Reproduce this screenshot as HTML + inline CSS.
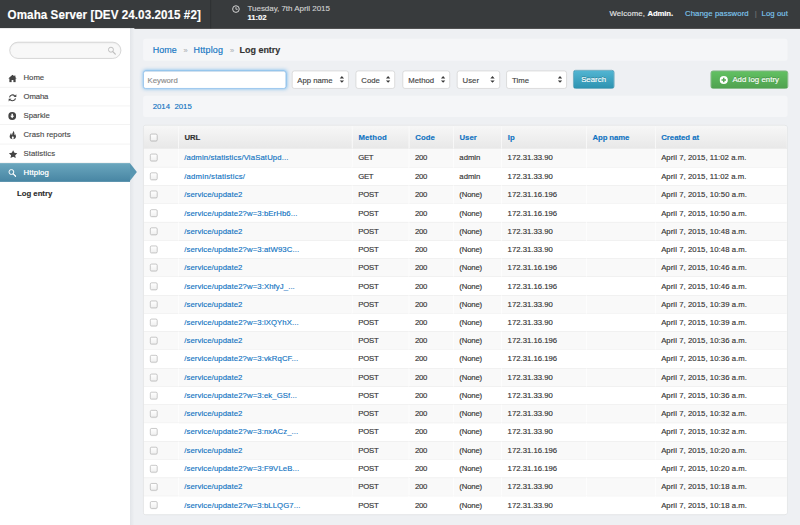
<!DOCTYPE html>
<html>
<head>
<meta charset="utf-8">
<title>Select log entry to change | Omaha Server</title>
<style>
html,body{margin:0;padding:0;}
body{width:800px;height:525px;overflow:hidden;background:#eef0f3;}
#scale{position:absolute;left:0;top:0;width:1280px;height:840px;transform:scale(0.625);transform-origin:0 0;
  font-family:"Liberation Sans",sans-serif;font-size:12.4px;line-height:18px;color:#333;background:#eef0f3;overflow:hidden;-webkit-text-stroke:0.22px;}
a{color:#1073c2;text-decoration:none;}
/* header */
#header{position:absolute;left:0;top:0;width:1280px;height:44.64px;background:#383b3d;color:#d8d8d8;box-shadow:0 1px 0 #222;}
#header h1{position:absolute;left:12.2px;top:10.52px;margin:0;font-size:18.6px;line-height:26px;font-weight:bold;color:#fff;white-space:nowrap;letter-spacing:0.1px;transform:scaleY(1.06);transform-origin:0 50%;}
#header .sep{position:absolute;left:336.48px;top:0;width:1px;height:44.64px;background:#26282a;border-right:1px solid #414446;}
#header .clock{position:absolute;left:371.1px;top:7.9px;}
#header .date{position:absolute;left:396.0px;top:4.60px;font-size:12.8px;line-height:16px;color:#d0d0d0;white-space:nowrap;}
#header .time{position:absolute;left:396.0px;top:20.16px;font-size:12.4px;line-height:16px;color:#fff;font-weight:bold;letter-spacing:-0.1px;}
#header .ut{position:absolute;top:11.90px;font-size:12.4px;line-height:18px;color:#e4e4e4;white-space:nowrap;}
#header .ut b{color:#fff;letter-spacing:-0.2px;}
#header a.ut{color:#7fc8f0;}
/* sidebar */
#left{position:absolute;left:0;top:44.64px;width:208.16px;height:800px;background:#fff;z-index:5;}
#centershadow{position:absolute;left:208.16px;top:44.64px;width:7px;height:800px;background:linear-gradient(to right,#e2e5e9,#eef0f3);}
#search{position:absolute;left:14.56px;top:67.2px;width:177.36px;height:24.56px;border:1px solid #c2c2c2;border-radius:14px;background:#f8f8f8;box-shadow:inset 0 1px 2px rgba(0,0,0,0.08);z-index:6;}
#search svg{position:absolute;right:7.4px;top:6px;}
.ni{position:absolute;left:0;width:208.16px;height:29.24px;border-bottom:1px solid #ececec;z-index:6;}
.ni .ic{position:absolute;left:13.12px;top:9.44px;line-height:0;}
.ni .nt{position:absolute;left:37.6px;top:5.60px;color:#4a4a4a;white-space:nowrap;}
#act{position:absolute;left:0;top:260.64px;width:208.16px;height:29.92px;background:linear-gradient(to bottom,#6ba7be,#4785a3);z-index:6;}
#act:after{content:"";position:absolute;left:208.16px;top:0;border-left:11.52px solid #5896b1;border-top:14.96px solid transparent;border-bottom:14.96px solid transparent;}
#act .ic{position:absolute;left:13.12px;top:9px;line-height:0;}
#act .nt{position:absolute;left:37.6px;top:6.32px;color:#fff;letter-spacing:0.22px;text-shadow:0 0 1px rgba(255,255,255,0.5);}
#sub{position:absolute;left:27.2px;top:299.76px;font-weight:bold;color:#2b2b2b;z-index:6;white-space:nowrap;}
/* center */
.box{position:absolute;left:229.12px;width:1030.72px;background:#f5f6f8;border-radius:4px;}
#bc{top:62.4px;height:34.56px;}
#bc span,#bc a,#bc b{position:absolute;top:7.40px;font-size:14.3px;line-height:18px;white-space:nowrap;}
#bc .d{color:#b4b8bc;font-size:12px;margin-top:1.6px;}
#dates{top:152.8px;height:34.40px;}
#dates a{position:absolute;top:7.90px;font-size:12.4px;line-height:18px;}
/* filters */
.f{position:absolute;top:112.8px;height:28.96px;box-sizing:border-box;border:1px solid #cbcbcb;border-radius:4px;background:#fff;font-size:12.4px;line-height:28.16px;color:#444;padding-left:8px;white-space:nowrap;}
.f .ar{position:absolute;right:6.2px;top:7.08px;}
#kw{left:229.12px;width:229.12px;border-color:#78b4e8;box-shadow:0 0 6px rgba(82,168,236,0.75), inset 0 1px 1px rgba(0,0,0,0.075);color:#8c8c8c;padding-left:6px;}
#btn-search{position:absolute;left:916.8px;top:112.48px;width:65.92px;height:29.44px;box-sizing:border-box;border:1px solid #2c8aa6;border-radius:4px;background:linear-gradient(to bottom,#52b5d2,#2e93b1);color:#fff;font-size:12.4px;line-height:29.84px;text-align:center;text-shadow:0 -1px 0 rgba(0,0,0,0.25);letter-spacing:0.1px;}
#btn-add{position:absolute;left:1136.64px;top:112.64px;width:124.16px;height:28.96px;box-sizing:border-box;border:1px solid #4c9b4c;border-radius:4px;background:linear-gradient(to bottom,#62c162,#50a250);color:#fff;font-size:12.4px;line-height:26.36px;text-shadow:0 -1px 0 rgba(0,0,0,0.25);white-space:nowrap;}
#btn-add svg{position:absolute;left:13.62px;top:6.98px;}
#btn-add span{position:absolute;left:34.20px;top:0;letter-spacing:0.12px;}
/* table */
#tbl{position:absolute;left:229.44px;top:200.4px;width:1030.24px;height:623.12px;border:1px solid #d9dadc;border-radius:4px;box-sizing:border-box;overflow:hidden;background:#fff;}
table{border-collapse:separate;border-spacing:0;width:1028.24px;table-layout:fixed;font-size:12.4px;}
th{height:36.36px;padding:1px 0 0 9.4px;text-align:left;font-weight:bold;color:#1073c2;border-left:1px solid #f7f7f7;border-bottom:1px solid #dcdcdc;background:linear-gradient(to bottom,#f7f7f7,#e8e8e8);box-sizing:border-box;white-space:nowrap;}
th.k{color:#333;}
td{height:29.238px;padding:0 0 0 9.2px;border-left:1px solid transparent;border-top:1px solid #ececec;box-sizing:border-box;color:#333;white-space:nowrap;overflow:hidden;}
tr.r1 td{background:#f9f9f9;border-left-color:#fff;}
tr.r2 td{background:#fff;}
tbody tr:first-child td{border-top:none;}
th:first-child,td:first-child{border-left:none;}
.cb{display:block;width:10px;height:10px;border:1px solid #a9a9a9;border-radius:2.5px;background:linear-gradient(to bottom,#fff,#f0f0f0);box-shadow:0 1px 0 rgba(0,0,0,0.06);}
</style>
</head>
<body>
<div id="scale">
  <div id="header">
    <h1>Omaha Server [DEV 24.03.2015 #2]</h1>
    <div class="sep"></div>
    <svg class="clock" width="13" height="13" viewBox="0 0 13 13"><circle cx="6.500" cy="6.500" r="5.300" fill="none" stroke="#e0e0e0" stroke-width="1.500"/><path d="M6.500 3.300v3.500h2.800" fill="none" stroke="#e0e0e0" stroke-width="1.300"/></svg>
    <div class="date" style="letter-spacing:-0.05px">Tuesday, 7th April 2015</div>
    <div class="time">11:02</div>
    <span class="ut" style="left:975.2px;letter-spacing:0.27px">Welcome,</span>
    <span class="ut" style="left:1036.0px"><b>Admin.</b></span>
    <a class="ut" style="left:1096.0px;letter-spacing:0.14px">Change password</a>
    <span class="ut" style="left:1207.68px;color:#6d7073">|</span>
    <a class="ut" style="left:1218.4px;letter-spacing:0.15px">Log out</a>
  </div>
  <div id="left"></div>
  <div id="centershadow"></div>
  <div id="search"><svg width="14" height="14" viewBox="0 0 14 14"><circle cx="5.500" cy="5.500" r="4" fill="none" stroke="#bcbcbc" stroke-width="1.500"/><path d="M8.500 8.500l4 4" stroke="#bcbcbc" stroke-width="1.900" stroke-linecap="round"/></svg></div>
<div class="ni" style="top:109.60px"><span class="ic" style="left:12.64px;top:9.12px"><svg width="14" height="13" viewBox="0 0 14 13"><path d="M7 0.4L0.2 6.6H2V12.6H5.6V8.8H8.4V12.6H12V6.6H13.8L11.6 4.6V1.7H9.9V3.05Z" fill="#444"/></svg></span><span class="nt" style="letter-spacing:-0.01px;margin-top:-0.3px">Home</span></div>
<div class="ni" style="top:139.84px"><span class="ic" style="left:12.8px;top:9.76px"><svg width="14" height="13" viewBox="0 0 14 13"><path d="M2.200 5.700A5 5 0 0 1 10.600 3.300" fill="none" stroke="#444" stroke-width="1.700"/><path d="M13.200 0.600v4.600H8.600z" fill="#444"/><path d="M11.800 7.300A5 5 0 0 1 3.400 9.700" fill="none" stroke="#444" stroke-width="1.700"/><path d="M0.800 12.400V7.800H5.400z" fill="#444"/></svg></span><span class="nt" style="letter-spacing:-0.19px">Omaha</span></div>
<div class="ni" style="top:170.08px"><span class="ic" style="left:13.44px;top:9.12px"><svg width="13" height="13" viewBox="0 0 13 13"><circle cx="6.500" cy="6.500" r="6.300" fill="#444"/><path d="M5.300 2.800h2.400v3.200h2.100L6.500 10 3.200 6h2.100z" fill="#fff"/></svg></span><span class="nt" style="letter-spacing:0.03px">Sparkle</span></div>
<div class="ni" style="top:200.32px"><span class="ic" style="left:13.76px;top:9.12px"><svg width="13" height="14" viewBox="0 0 13 14"><path fill-rule="evenodd" d="M6.800 0.300C7.600 2 6.400 3.600 5.600 5C5.200 5.800 5.300 6.800 5.900 7.400C5.200 7.300 4.500 6.600 4.400 5.600C4.300 4.800 3.900 4.200 3.200 3.800C3.600 5.400 1.400 7 1.400 9.400C1.400 11.900 3.600 13.700 6.500 13.700C9.400 13.700 11.600 12 11.600 9.400C11.600 7.600 10.600 6.600 10.400 5.200C9.800 5.800 9.600 6.600 9.700 7.400C8.600 6.400 9.400 4.600 8.800 3C8.400 1.800 7.600 0.800 6.800 0.300ZM6.500 13.200C5.300 13 4.600 12 5 10.900C5.300 10 6.200 9.600 6.300 8.400C7.600 9.400 8.300 10.400 8.100 11.600C8 12.500 7.400 13 6.500 13.200Z" fill="#444"/></svg></span><span class="nt" style="letter-spacing:0.03px">Crash reports</span></div>
<div class="ni" style="top:230.56px"><span class="ic" style="left:13.6px;top:9.92px"><svg width="14" height="13" viewBox="0 0 14 13"><path d="M7 0.200l2.100 4.300 4.700.600-3.500 3.200.9 4.600L7 10.600l-4.200 2.300.9-4.600L.200 5.100l4.700-.600z" fill="#444"/></svg></span><span class="nt" style="letter-spacing:0.1px">Statistics</span></div>
  <div id="act"><span class="ic"><svg width="13" height="13" viewBox="0 0 13 13"><circle cx="5.200" cy="5.200" r="3.900" fill="none" stroke="#fff" stroke-width="1.600"/><path d="M8.200 8.200l3.800 3.800" stroke="#fff" stroke-width="2" stroke-linecap="round"/></svg></span><span class="nt">Httplog</span></div>
  <div id="sub">Log entry</div>
  <div id="bc" class="box"><a style="left:15.28px;letter-spacing:0.1px">Home</a><span class="d" style="left:64.32px">&raquo;</span><a style="left:80.64px;letter-spacing:0.27px">Httplog</a><span class="d" style="left:138.88px">&raquo;</span><b style="left:154.24px">Log entry</b></div>
  <div id="dates" class="box"><a style="left:15.28px">2014</a><a style="left:50.08px">2015</a></div>
  <div id="kw" class="f">Keyword</div>
  <div class="f" style="left:466.56px;width:91.68px"><span style="letter-spacing:0px">App name</span><svg class="ar" width="8" height="12.400" viewBox="0 0 8 12"><path d="M0.500 4.500L4 0.600l3.500 3.900zM0.500 7.500L4 11.400l3.500-3.900z" fill="#3a3a3a"/></svg></div>
  <div class="f" style="left:569.12px;width:63.20px"><span style="letter-spacing:0px">Code</span><svg class="ar" width="8" height="12.400" viewBox="0 0 8 12"><path d="M0.500 4.500L4 0.600l3.500 3.900zM0.500 7.500L4 11.400l3.500-3.900z" fill="#3a3a3a"/></svg></div>
  <div class="f" style="left:644.16px;width:75.84px"><span style="letter-spacing:0px">Method</span><svg class="ar" width="8" height="12.400" viewBox="0 0 8 12"><path d="M0.500 4.500L4 0.600l3.500 3.900zM0.500 7.500L4 11.400l3.500-3.900z" fill="#3a3a3a"/></svg></div>
  <div class="f" style="left:731.2px;width:68.40px"><span style="letter-spacing:0px">User</span><svg class="ar" width="8" height="12.400" viewBox="0 0 8 12"><path d="M0.500 4.500L4 0.600l3.500 3.900zM0.500 7.500L4 11.400l3.500-3.900z" fill="#3a3a3a"/></svg></div>
  <div class="f" style="left:810.4px;width:96.40px"><span style="letter-spacing:0px">Time</span><svg class="ar" width="8" height="12.400" viewBox="0 0 8 12"><path d="M0.500 4.500L4 0.600l3.500 3.900zM0.500 7.500L4 11.400l3.500-3.900z" fill="#3a3a3a"/></svg></div>
  <div id="btn-search">Search</div>
  <div id="btn-add"><svg width="14" height="14" viewBox="0 0 14 14"><circle cx="7" cy="7" r="6.500" fill="#fff"/><path d="M7 3.400v7.200M3.400 7h7.200" stroke="#55a855" stroke-width="2.300"/></svg><span>Add log entry</span></div>
  <div id="tbl">
    <table>
      <colgroup><col style="width:54.52px"><col style="width:278.24px"><col style="width:90.80px"><col style="width:70.80px"><col style="width:77.20px"><col style="width:135.76px"><col style="width:109.92px"><col style="width:211.00px"></colgroup>
      <thead><tr><th class="c"><i class="cb"></i></th><th class="k" style="letter-spacing:-0.2px">URL</th><th style="letter-spacing:0.25px">Method</th><th style="letter-spacing:0.15px">Code</th><th>User</th><th>Ip</th><th style="letter-spacing:-0.17px">App name</th><th>Created at</th></tr></thead>
      <tbody>
<tr class="r1"><td class="c"><i class="cb"></i></td><td style="padding-left:8.8px"><a style="letter-spacing:0.2px">/admin/statistics/ViaSatUpd...</a></td><td style="letter-spacing:-0.6px">GET</td><td style="letter-spacing:-0.6px">200</td><td style="letter-spacing:-0.03px">admin</td><td>172.31.33.90</td><td></td><td style="letter-spacing:0.1px">April 7, 2015, 11:02 a.m.</td></tr>
<tr class="r2"><td class="c"><i class="cb"></i></td><td style="padding-left:8.8px"><a style="letter-spacing:0.33px">/admin/statistics/</a></td><td style="letter-spacing:-0.6px">GET</td><td style="letter-spacing:-0.6px">200</td><td style="letter-spacing:-0.03px">admin</td><td>172.31.33.90</td><td></td><td style="letter-spacing:0.1px">April 7, 2015, 11:02 a.m.</td></tr>
<tr class="r1"><td class="c"><i class="cb"></i></td><td style="padding-left:8.8px"><a style="letter-spacing:0.14px">/service/update2</a></td><td style="letter-spacing:-0.4px">POST</td><td style="letter-spacing:-0.6px">200</td><td style="letter-spacing:-0.3px">(None)</td><td>172.31.16.196</td><td></td><td style="letter-spacing:0.1px">April 7, 2015, 10:50 a.m.</td></tr>
<tr class="r2"><td class="c"><i class="cb"></i></td><td style="padding-left:8.8px"><a style="letter-spacing:0.15px">/service/update2?w=3:bErHb6...</a></td><td style="letter-spacing:-0.4px">POST</td><td style="letter-spacing:-0.6px">200</td><td style="letter-spacing:-0.3px">(None)</td><td>172.31.16.196</td><td></td><td style="letter-spacing:0.1px">April 7, 2015, 10:50 a.m.</td></tr>
<tr class="r1"><td class="c"><i class="cb"></i></td><td style="padding-left:8.8px"><a style="letter-spacing:0.14px">/service/update2</a></td><td style="letter-spacing:-0.4px">POST</td><td style="letter-spacing:-0.6px">200</td><td style="letter-spacing:-0.3px">(None)</td><td>172.31.33.90</td><td></td><td style="letter-spacing:0.1px">April 7, 2015, 10:48 a.m.</td></tr>
<tr class="r2"><td class="c"><i class="cb"></i></td><td style="padding-left:8.8px"><a style="letter-spacing:0.15px">/service/update2?w=3:atW93C...</a></td><td style="letter-spacing:-0.4px">POST</td><td style="letter-spacing:-0.6px">200</td><td style="letter-spacing:-0.3px">(None)</td><td>172.31.33.90</td><td></td><td style="letter-spacing:0.1px">April 7, 2015, 10:48 a.m.</td></tr>
<tr class="r1"><td class="c"><i class="cb"></i></td><td style="padding-left:8.8px"><a style="letter-spacing:0.14px">/service/update2</a></td><td style="letter-spacing:-0.4px">POST</td><td style="letter-spacing:-0.6px">200</td><td style="letter-spacing:-0.3px">(None)</td><td>172.31.16.196</td><td></td><td style="letter-spacing:0.1px">April 7, 2015, 10:46 a.m.</td></tr>
<tr class="r2"><td class="c"><i class="cb"></i></td><td style="padding-left:8.8px"><a style="letter-spacing:0.15px">/service/update2?w=3:XhfyJ_...</a></td><td style="letter-spacing:-0.4px">POST</td><td style="letter-spacing:-0.6px">200</td><td style="letter-spacing:-0.3px">(None)</td><td>172.31.16.196</td><td></td><td style="letter-spacing:0.1px">April 7, 2015, 10:46 a.m.</td></tr>
<tr class="r1"><td class="c"><i class="cb"></i></td><td style="padding-left:8.8px"><a style="letter-spacing:0.14px">/service/update2</a></td><td style="letter-spacing:-0.4px">POST</td><td style="letter-spacing:-0.6px">200</td><td style="letter-spacing:-0.3px">(None)</td><td>172.31.33.90</td><td></td><td style="letter-spacing:0.1px">April 7, 2015, 10:39 a.m.</td></tr>
<tr class="r2"><td class="c"><i class="cb"></i></td><td style="padding-left:8.8px"><a style="letter-spacing:0.15px">/service/update2?w=3:lXQYhX...</a></td><td style="letter-spacing:-0.4px">POST</td><td style="letter-spacing:-0.6px">200</td><td style="letter-spacing:-0.3px">(None)</td><td>172.31.33.90</td><td></td><td style="letter-spacing:0.1px">April 7, 2015, 10:39 a.m.</td></tr>
<tr class="r1"><td class="c"><i class="cb"></i></td><td style="padding-left:8.8px"><a style="letter-spacing:0.14px">/service/update2</a></td><td style="letter-spacing:-0.4px">POST</td><td style="letter-spacing:-0.6px">200</td><td style="letter-spacing:-0.3px">(None)</td><td>172.31.16.196</td><td></td><td style="letter-spacing:0.1px">April 7, 2015, 10:36 a.m.</td></tr>
<tr class="r2"><td class="c"><i class="cb"></i></td><td style="padding-left:8.8px"><a style="letter-spacing:0.15px">/service/update2?w=3:vkRqCF...</a></td><td style="letter-spacing:-0.4px">POST</td><td style="letter-spacing:-0.6px">200</td><td style="letter-spacing:-0.3px">(None)</td><td>172.31.16.196</td><td></td><td style="letter-spacing:0.1px">April 7, 2015, 10:36 a.m.</td></tr>
<tr class="r1"><td class="c"><i class="cb"></i></td><td style="padding-left:8.8px"><a style="letter-spacing:0.14px">/service/update2</a></td><td style="letter-spacing:-0.4px">POST</td><td style="letter-spacing:-0.6px">200</td><td style="letter-spacing:-0.3px">(None)</td><td>172.31.33.90</td><td></td><td style="letter-spacing:0.1px">April 7, 2015, 10:36 a.m.</td></tr>
<tr class="r2"><td class="c"><i class="cb"></i></td><td style="padding-left:8.8px"><a style="letter-spacing:0.15px">/service/update2?w=3:ek_GSf...</a></td><td style="letter-spacing:-0.4px">POST</td><td style="letter-spacing:-0.6px">200</td><td style="letter-spacing:-0.3px">(None)</td><td>172.31.33.90</td><td></td><td style="letter-spacing:0.1px">April 7, 2015, 10:36 a.m.</td></tr>
<tr class="r1"><td class="c"><i class="cb"></i></td><td style="padding-left:8.8px"><a style="letter-spacing:0.14px">/service/update2</a></td><td style="letter-spacing:-0.4px">POST</td><td style="letter-spacing:-0.6px">200</td><td style="letter-spacing:-0.3px">(None)</td><td>172.31.33.90</td><td></td><td style="letter-spacing:0.1px">April 7, 2015, 10:32 a.m.</td></tr>
<tr class="r2"><td class="c"><i class="cb"></i></td><td style="padding-left:8.8px"><a style="letter-spacing:0.15px">/service/update2?w=3:nxACz_...</a></td><td style="letter-spacing:-0.4px">POST</td><td style="letter-spacing:-0.6px">200</td><td style="letter-spacing:-0.3px">(None)</td><td>172.31.33.90</td><td></td><td style="letter-spacing:0.1px">April 7, 2015, 10:32 a.m.</td></tr>
<tr class="r1"><td class="c"><i class="cb"></i></td><td style="padding-left:8.8px"><a style="letter-spacing:0.14px">/service/update2</a></td><td style="letter-spacing:-0.4px">POST</td><td style="letter-spacing:-0.6px">200</td><td style="letter-spacing:-0.3px">(None)</td><td>172.31.16.196</td><td></td><td style="letter-spacing:0.1px">April 7, 2015, 10:20 a.m.</td></tr>
<tr class="r2"><td class="c"><i class="cb"></i></td><td style="padding-left:8.8px"><a style="letter-spacing:0.15px">/service/update2?w=3:F9VLeB...</a></td><td style="letter-spacing:-0.4px">POST</td><td style="letter-spacing:-0.6px">200</td><td style="letter-spacing:-0.3px">(None)</td><td>172.31.16.196</td><td></td><td style="letter-spacing:0.1px">April 7, 2015, 10:20 a.m.</td></tr>
<tr class="r1"><td class="c"><i class="cb"></i></td><td style="padding-left:8.8px"><a style="letter-spacing:0.14px">/service/update2</a></td><td style="letter-spacing:-0.4px">POST</td><td style="letter-spacing:-0.6px">200</td><td style="letter-spacing:-0.3px">(None)</td><td>172.31.33.90</td><td></td><td style="letter-spacing:0.1px">April 7, 2015, 10:18 a.m.</td></tr>
<tr class="r2"><td class="c"><i class="cb"></i></td><td style="padding-left:8.8px"><a style="letter-spacing:0.15px">/service/update2?w=3:bLLQG7...</a></td><td style="letter-spacing:-0.4px">POST</td><td style="letter-spacing:-0.6px">200</td><td style="letter-spacing:-0.3px">(None)</td><td>172.31.33.90</td><td></td><td style="letter-spacing:0.1px">April 7, 2015, 10:18 a.m.</td></tr>
      </tbody>
    </table>
  </div>
</div>
</body>
</html>
